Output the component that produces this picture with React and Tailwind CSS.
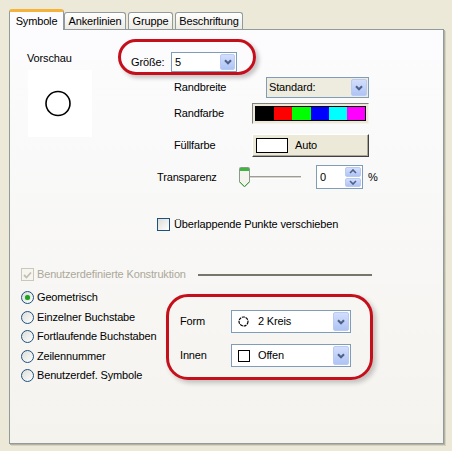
import React from 'react'

// XP-style "Symbole" property page with red callout marks

function DropBtn({ className = '' }) {
  return (
    <div className={`flex items-center justify-center rounded-[2px] border border-[#b9cbf3] bg-linear-to-b from-[#d3defb] to-[#afc4f5] ${className}`}>
      <svg width="8" height="6" viewBox="0 0 8 6">
        <path d="M1 1.2 L4 4.3 L7 1.2" stroke="#4d6185" strokeWidth="2" fill="none" />
      </svg>
    </div>
  )
}

function SpinBtn({ up }) {
  return (
    <div className="flex-1 flex items-center justify-center rounded-[2px] border border-[#b9cbf3] bg-linear-to-b from-[#d3defb] to-[#afc4f5]">
      <svg width="8" height="5" viewBox="0 0 8 5">
        <path d={up ? 'M1 4 L4 1 L7 4' : 'M1 1 L4 4 L7 1'} stroke="#4d6185" strokeWidth="1.6" fill="none" />
      </svg>
    </div>
  )
}

function Radio({ checked, label }) {
  return (
    <div className="flex items-center h-[19.5px]">
      <div className="w-[13px] h-[13px] rounded-full border border-[#1c5180] bg-linear-to-br from-[#dcdcd7] to-white flex items-center justify-center">
        {checked && <div className="w-[5px] h-[5px] rounded-full bg-[#21a121] shadow-[0_0_1px_#6bd46b]" />}
      </div>
      <span className="ml-[3px]">{label}</span>
    </div>
  )
}

function Tab({ label, active, w }) {
  if (active) {
    return (
      <div
        className={`relative z-10 -mb-px h-[21px] ${w} flex items-center justify-center bg-[#fcfcfe] border-x border-[#919b9c] border-t-[3px] border-t-[#f5b33a] rounded-t-[3px]`}
      >
        {label}
      </div>
    )
  }
  return (
    <div
      className={`h-[17px] ${w} flex items-center justify-center bg-linear-to-b from-white to-[#ecebe5] border-x border-t border-[#919b9c] rounded-t-[3px]`}
    >
      {label}
    </div>
  )
}

export default function App() {
  return (
    <div className="w-[452px] h-[451px] bg-[#ece9d8] font-['Liberation_Sans',Arial,sans-serif] text-[11px] leading-[13px] tracking-[-0.15px] text-black overflow-hidden">
      {/* tabs */}
      <div className="flex items-end pl-[9px] pt-[9px] h-[29px] gap-[2px]">
        <Tab label="Symbole" active w="w-[55px] -mr-[2px]" />
        <Tab label="Ankerlinien" w="w-[62px]" />
        <Tab label="Gruppe" w="w-[45px]" />
        <Tab label="Beschriftung" w="w-[68px]" />
      </div>

      {/* page */}
      <div className="ml-[9px] w-[435px] h-[415px] border border-[#919b9c] bg-linear-to-b from-[#fcfcfe] to-[#f4f3ee] shadow-[1px_1px_0_#b5b2a3,2px_2px_0_#d6d3c4]">
        {/* top section */}
        <div className="flex pt-[9px]">
          <div className="ml-[17px] w-[65px] mt-[13px]">
            <div>Vorschau</div>
            <div className="mt-[5px] ml-px w-[64px] h-[67px] bg-white">
              <svg width="64" height="67" viewBox="0 0 64 67">
                <circle cx="30" cy="33.5" r="12" stroke="#000" strokeWidth="1.6" fill="none" />
              </svg>
            </div>
          </div>

          <div className="ml-[26px]">
            {/* Größe callout */}
            <div className="w-[138px] h-[36px] rounded-[18px] border-[3px] border-[#c5101c] shadow-[3px_3px_4px_rgba(0,0,0,0.22)] flex items-start pl-[10px] pt-[10px]">
              <div className="w-[40px] h-[20px] flex items-center">Größe:</div>
              <div className="w-[66px] h-[20px] border border-[#7f9db9] bg-white flex items-center pl-[3px] pr-px">
                <span>5</span>
                <DropBtn className="ml-auto w-[15px] h-[16px]" />
              </div>
            </div>

            <div className="ml-[56px]">
              <div className="mt-[2px] flex items-center h-[21px]">
                <div className="w-[78px]">Randbreite</div>
                <div className="ml-[14px] w-[103px] h-[21px] border border-[#7f9db9] bg-[#eeebdf] flex items-center pl-[2px] pr-px">
                  <span>Standard:</span>
                  <DropBtn className="ml-auto w-[16px] h-[17px]" />
                </div>
              </div>

              <div className="mt-[5px] flex items-center h-[21px]">
                <div className="w-[78px]">Randfarbe</div>
                <div className="w-[117px] h-[21px] border border-t-[#808080] border-l-[#808080] border-b-[#f4f3ee] border-r-[#f4f3ee] bg-[#ece9d8] p-[2px]">
                  <div className="flex h-full border border-black">
                    <div className="flex-1 bg-black" />
                    <div className="flex-1 bg-[#ff0000]" />
                    <div className="flex-1 bg-[#00ff00]" />
                    <div className="flex-1 bg-[#0000ff]" />
                    <div className="flex-1 bg-[#00ffff]" />
                    <div className="flex-1 bg-[#ff00ff]" />
                  </div>
                </div>
              </div>

              <div className="mt-[10px] flex items-center h-[23px]">
                <div className="w-[78px]">Füllfarbe</div>
                <div className="w-[117px] h-[23px] bg-[#ece9d8] border border-t-white border-l-white border-b-[#404040] border-r-[#404040] shadow-[inset_-1px_-1px_0_#aca899] flex items-center pl-[3px]">
                  <div className="w-[32px] h-[15px] bg-white border border-black" />
                  <span className="ml-[7px]">Auto</span>
                </div>
              </div>
            </div>

            <div className="ml-[39px] mt-[8px] flex items-center h-[24px]">
              <div className="w-[82px]">Transparenz</div>
              <div className="relative w-[62px] h-[21px] flex items-center">
                <div className="absolute left-[5px] right-0 top-[9px] h-[3px] border-t border-t-[#9d9c99] border-b border-b-white bg-[#d7d5cb]" />
                <svg className="relative" width="11" height="21" viewBox="0 0 11 21">
                  <path d="M0.5 1.5 Q0.5 0.5 1.5 0.5 L9.5 0.5 Q10.5 0.5 10.5 1.5 L10.5 15 L5.5 20 L0.5 15 Z" fill="#f4f3ee" stroke="#8c9a8e" />
                  <rect x="1" y="1" width="9" height="3" fill="#3fb63f" />
                  <path d="M1 15 L5.5 19.5 L10 15" stroke="#38a838" fill="none" />
                </svg>
              </div>
              <div className="ml-[15px] w-[47px] h-[24px] border border-[#7f9db9] bg-white flex items-center pl-[3px] pr-px">
                <span>0</span>
                <div className="ml-auto w-[16px] h-[20px] flex flex-col gap-px">
                  <SpinBtn up />
                  <SpinBtn />
                </div>
              </div>
              <span className="ml-[5px]">%</span>
            </div>

            <div className="ml-[39px] mt-[29px] flex items-center h-[13px]">
              <div className="w-[13px] h-[13px] border border-[#1c5180] bg-linear-to-br from-[#dcdcd7] to-white" />
              <span className="ml-[4px]">Überlappende Punkte verschieben</span>
            </div>
          </div>
        </div>

        {/* custom construction */}
        <div className="ml-[11px] mt-[37px] flex items-center h-[13px]">
          <div className="w-[13px] h-[13px] border border-[#cac8bb] bg-[#f6f5ef] flex items-center justify-center">
            <svg width="9" height="8" viewBox="0 0 9 8">
              <path d="M1 4 L3.5 6.5 L8 1.5" stroke="#c2c0b3" strokeWidth="1.8" fill="none" />
            </svg>
          </div>
          <span className="ml-[3px] text-[#aca899]">Benutzerdefinierte Konstruktion</span>
          <div className="ml-[12px] w-[174px] h-[2px] bg-[#77766b]" />
        </div>

        {/* bottom section */}
        <div className="flex mt-[7px]">
          <div className="ml-[11px] w-[145px]">
            <Radio checked label="Geometrisch" />
            <Radio label="Einzelner Buchstabe" />
            <Radio label="Fortlaufende Buchstaben" />
            <Radio label="Zeilennummer" />
            <Radio label="Benutzerdef. Symbole" />
          </div>

          <div className="mt-[6px] w-[207px] h-[86px] rounded-[22px] border-[3px] border-[#c5101c] shadow-[3px_3px_5px_rgba(0,0,0,0.22)] pl-[11px] pt-[13px]">
            <div className="flex items-center h-[23px]">
              <div className="w-[51px]">Form</div>
              <div className="w-[120px] h-[23px] border border-[#7f9db9] bg-white flex items-center pl-[6px] pr-px">
                <svg width="11" height="11" viewBox="0 0 11 11">
                  <circle cx="5.5" cy="5.5" r="4.5" stroke="#000" strokeWidth="1.2" strokeDasharray="3 0.8" fill="none" />
                </svg>
                <span className="ml-[9px]">2 Kreis</span>
                <DropBtn className="ml-auto w-[16px] h-[19px]" />
              </div>
            </div>
            <div className="mt-[11px] flex items-center h-[23px]">
              <div className="w-[51px]">Innen</div>
              <div className="w-[120px] h-[23px] border border-[#7f9db9] bg-white flex items-center pl-[6px] pr-px">
                <div className="w-[12px] h-[12px] border border-black bg-white" />
                <span className="ml-[8px]">Offen</span>
                <DropBtn className="ml-auto w-[16px] h-[19px]" />
              </div>
            </div>
          </div>
        </div>
      </div>
    </div>
  )
}
